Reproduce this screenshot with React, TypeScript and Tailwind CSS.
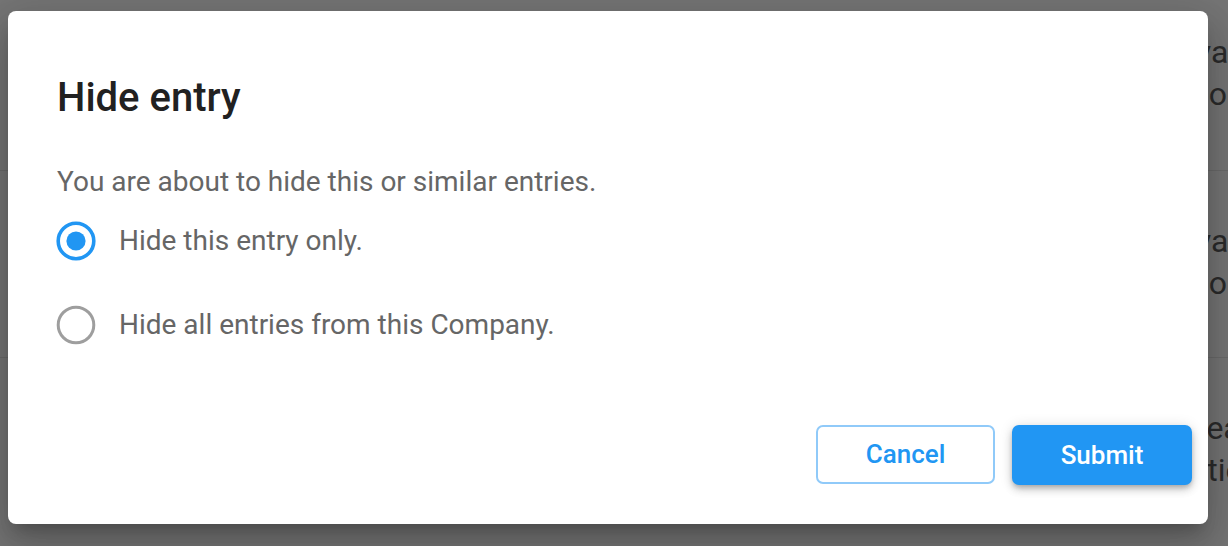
import React from "react";

function Radio({ checked }: { checked: boolean }) {
  return (
    <svg width="40" height="40" viewBox="0 0 40 40" className="shrink-0">
      <circle
        cx="20"
        cy="20"
        r="17.8"
        fill="none"
        stroke={checked ? "#2196f3" : "#9e9e9e"}
        strokeWidth={checked ? 3.6 : 3}
      />
      {checked && <circle cx="20" cy="20" r="9.6" fill="#2196f3" />}
    </svg>
  );
}

export default function App() {
  return (
    <div
      className="relative h-[546px] w-full overflow-hidden bg-white"
      style={{ fontFamily: "Roboto, 'Noto Sans', Arial, sans-serif" }}
    >
      {/* underlying page */}
      <div className="flex flex-col text-[32px] leading-[42px] text-[#5f5f5f] whitespace-nowrap">
        <div className="h-[171px] border-b border-[#e6e6e6] pt-[31px]">
          <div className="pl-[1161px]">Java Developer</div>
          <div className="pl-[1131px]">Development</div>
        </div>
        <div className="h-[187px] border-b border-[#e6e6e6] pt-[49px]">
          <div className="pl-[1161px]">Java Engineer</div>
          <div className="pl-[1131px]">Development</div>
        </div>
        <div className="h-[187px] pt-[49px]">
          <div className="pl-[1175px]">Creative Lead</div>
          <div className="pl-[1128px]">Activities</div>
        </div>
      </div>

      {/* overlay */}
      <div className="absolute inset-0 bg-black/[0.54]" />

      {/* dialog */}
      <div className="absolute inset-0 pl-[8px] pt-[11px]">
        <div className="flex h-[513px] w-[1200px] flex-col rounded-[8px] bg-white pl-[49px] pr-[16px] pt-[63px] pb-[39px] shadow-[0_11px_15px_-7px_rgba(0,0,0,0.2),0_24px_38px_3px_rgba(0,0,0,0.14),0_9px_46px_8px_rgba(0,0,0,0.12)]">
          <h2 className="text-[40px] leading-[48px] font-medium text-[#212121]">Hide entry</h2>
          <p className="mt-[42px] text-[28px] leading-[36px] text-[#666666]">
            You are about to hide this or similar entries.
          </p>
          <div className="mt-[17px] flex h-[48px] items-center">
            <div className="-ml-[1px]">
              <Radio checked />
            </div>
            <span className="ml-[23px] text-[28px] leading-[36px] text-[#666666]">
              Hide this entry only.
            </span>
          </div>
          <div className="mt-[36px] flex h-[48px] items-center">
            <div className="-ml-[1px]">
              <Radio checked={false} />
            </div>
            <span className="ml-[23px] text-[28px] leading-[36px] text-[#666666]">
              Hide all entries from this Company.
            </span>
          </div>
          <div className="mt-auto flex justify-end gap-[17px]">
            <button className="flex h-[59px] w-[179px] items-center justify-center rounded-[7px] border-2 border-[#90caf9] bg-white text-[26px] font-medium text-[#2196f3]">
              Cancel
            </button>
            <button className="flex h-[60px] w-[180px] items-center justify-center rounded-[7px] bg-[#2196f3] text-[26px] font-medium text-white shadow-[0_3px_5px_-1px_rgba(0,0,0,0.2),0_5px_8px_0_rgba(0,0,0,0.14),0_1px_14px_0_rgba(0,0,0,0.12)]">
              Submit
            </button>
          </div>
        </div>
      </div>
    </div>
  );
}
